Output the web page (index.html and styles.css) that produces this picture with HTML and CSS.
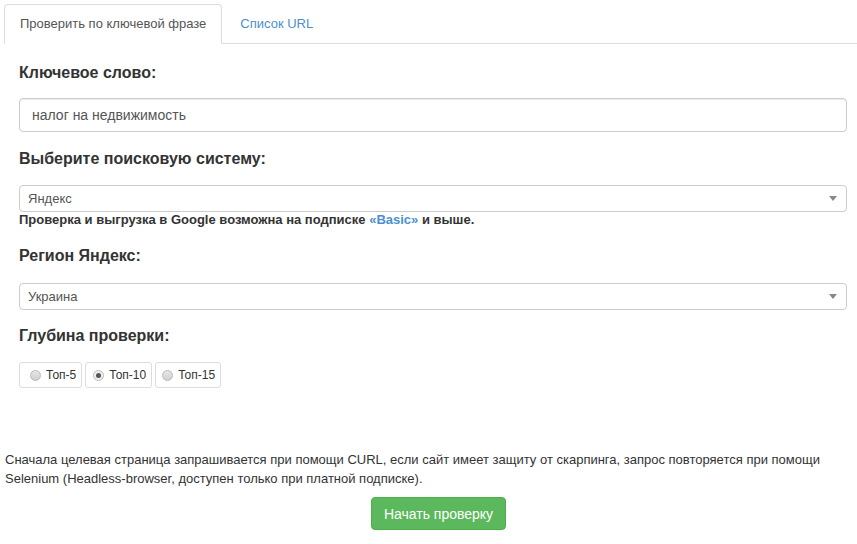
FILE: index.html
```html
<!DOCTYPE html>
<html lang="ru">
<head>
<meta charset="utf-8">
<title>Проверка</title>
<link rel="stylesheet" href="styles.css">
</head>
<body>
<div class="page">
  <ul class="tabs">
    <li class="tab active"><span>Проверить по ключевой фразе</span></li>
    <li class="tab"><span class="link">Список URL</span></li>
  </ul>
  <div class="form">
    <div class="label l1">Ключевое слово:</div>
    <div class="input">налог на недвижимость</div>
    <div class="label l2">Выберите поисковую систему:</div>
    <div class="select"><span>Яндекс</span><span class="arrow"></span></div>
    <div class="note">Проверка и выгрузка в Google возможна на подписке <span class="link">«Basic»</span> и выше.</div>
    <div class="label l3">Регион Яндекс:</div>
    <div class="select"><span>Украина</span><span class="arrow"></span></div>
    <div class="label l4">Глубина проверки:</div>
    <div class="radios">
      <label class="radio"><span class="dot"></span>Топ-5</label>
      <label class="radio"><span class="dot checked"></span>Топ-10</label>
      <label class="radio"><span class="dot"></span>Топ-15</label>
    </div>
  </div>
  <p class="info">Сначала целевая страница запрашивается при помощи CURL, если сайт имеет защиту от скарпинга, запрос повторяется при помощи Selenium (Headless-browser, доступен только при платной подписке).</p>
  <div class="actions"><button class="btn">Начать проверку</button></div>
</div>
</body>
</html>
```

FILE: styles.css
```css
* { box-sizing: border-box; }
html, body { margin: 0; padding: 0; background: #fff; }
body {
  font-family: "Liberation Sans", Arial, sans-serif;
  color: #333;
  font-size: 14px;
}
.page { padding: 4px 0 0 4px; }
.tabs {
  list-style: none;
  margin: 0;
  padding: 0;
  display: flex;
  border-bottom: 1px solid #ddd;
}
.tab {
  margin-right: 2px;
  margin-bottom: -1px;
  padding: 10px 15px;
  font-size: 13px;
  line-height: 18px;
  border: 1px solid transparent;
  border-radius: 4px 4px 0 0;
}
.tab.active {
  border-color: #ddd;
  border-bottom-color: #fff;
  color: #555;
  background: #fff;
}
.link { color: #4a90d0; }
.form { padding: 0 10px 0 15px; }
.label {
  font-size: 16px;
  font-weight: bold;
  line-height: 20px;
  color: #333;
}
.l1 { margin-top: 19px; }
.l2 { margin-top: 17px; }
.l3 { margin-top: 18px; }
.l4 { margin-top: 16px; }
.input {
  margin-top: 15px;
  height: 34px;
  border: 1px solid #ccc;
  border-radius: 4px;
  padding: 0 12px;
  display: flex;
  align-items: center;
  font-size: 14px;
  color: #555;
  box-shadow: inset 0 1px 1px rgba(0,0,0,.075);
}
.select {
  margin-top: 16px;
  height: 27px;
  border: 1px solid #ccc;
  border-radius: 4px;
  padding: 0 8px;
  display: flex;
  align-items: center;
  justify-content: space-between;
  font-size: 13px;
  color: #555;
}
.l3 + .select { margin-top: 17px; }
.arrow {
  width: 0;
  height: 0;
  border-left: 4px solid transparent;
  border-right: 4px solid transparent;
  border-top: 5px solid #888;
  margin-right: 1px;
}
.note {
  font-size: 13px;
  font-weight: bold;
  line-height: 16px;
  color: #333;
}
.radios {
  margin-top: 16px;
  display: flex;
  gap: 3px;
}
.radio {
  height: 26px;
  border: 1px solid #ddd;
  border-radius: 3px;
  display: flex;
  align-items: center;
  padding: 0 5px 0 7px;
  font-size: 12px;
  color: #333;
}
.radio:first-child { padding-left: 10px; }
.radio:last-child { padding-left: 6px; }
.dot {
  width: 11px;
  height: 11px;
  border-radius: 50%;
  border: 1px solid #bbb;
  background: linear-gradient(#e6e6e6, #d0d0d0);
  margin-right: 5px;
  display: inline-flex;
  align-items: center;
  justify-content: center;
}
.dot.checked { background: #eee; }
.dot.checked::after {
  content: "";
  width: 5px;
  height: 5px;
  border-radius: 50%;
  background: #555;
}
.info {
  margin: 62px 0 0 1px;
  font-size: 13px;
  line-height: 19px;
  color: #333;
  padding-right: 30px;
}
.actions {
  margin-top: 9px;
  display: flex;
  justify-content: center;
  padding-left: 16px;
}
.btn {
  font-family: "Liberation Sans", Arial, sans-serif;
  font-size: 14px;
  line-height: 20px;
  color: #fff;
  background: #5cb85c;
  border: 1px solid #4cae4c;
  border-radius: 4px;
  padding: 6px 12px;
  height: 33px;
  white-space: nowrap;
}
```
